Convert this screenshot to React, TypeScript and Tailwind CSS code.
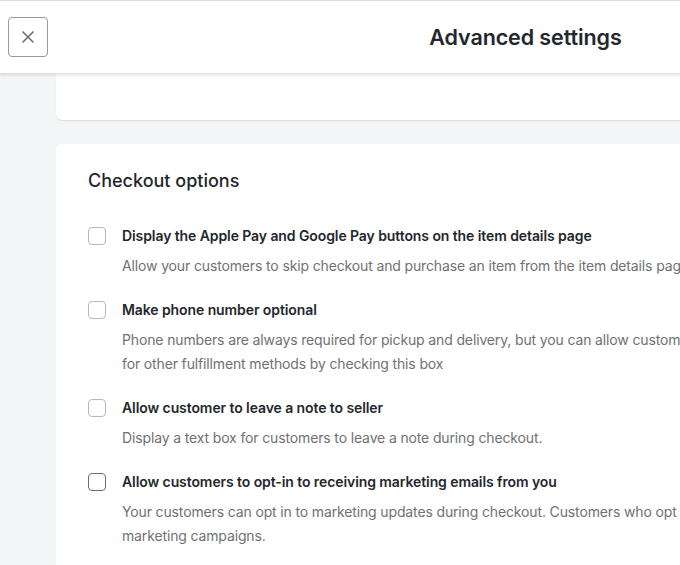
import React from "react";

const items = [
  {
    title: "Display the Apple Pay and Google Pay buttons on the item details page",
    desc: ["Allow your customers to skip checkout and purchase an item from the item details page without adding it to their cart first."],
    dark: false,
  },
  {
    title: "Make phone number optional",
    desc: [
      "Phone numbers are always required for pickup and delivery, but you can allow customers to skip this field",
      "for other fulfillment methods by checking this box",
    ],
    dark: false,
  },
  {
    title: "Allow customer to leave a note to seller",
    desc: ["Display a text box for customers to leave a note during checkout."],
    dark: false,
  },
  {
    title: "Allow customers to opt-in to receiving marketing emails from you",
    desc: [
      "Your customers can opt in to marketing updates during checkout. Customers who opt in will be added to your",
      "marketing campaigns.",
    ],
    dark: true,
  },
];

export default function App() {
  return (
    <div
      className="w-[680px] h-[565px] overflow-hidden bg-[#f4f5f6] relative"
      style={{ fontFamily: "Inter, 'Noto Sans', sans-serif" }}
    >
      <div className="w-[1050px]">
        <div className="relative z-10 h-[73px] bg-white border-t border-[#dcdcdc] shadow-[0_2px_3px_rgba(0,0,0,0.12)] flex items-center px-2">
          <button className="w-10 h-10 border border-[#9a9a9a] rounded-[4px] flex items-center justify-center text-[#666]">
            <svg width="14" height="14" viewBox="0 0 14 14" fill="none" stroke="#6f6f6f" strokeWidth="1.6">
              <path d="M1.5 1.5 L12.5 12.5 M12.5 1.5 L1.5 12.5" />
            </svg>
          </button>
          <div className="flex-1 text-center text-[21.5px] font-semibold text-[#23272d] pr-[39px] tracking-[-0.1px]">
            Advanced settings
          </div>
        </div>
        <div className="px-[56px]">
          <div className="h-[47px] bg-white rounded-b-[6px] shadow-[0_1px_1px_rgba(0,0,0,0.1)]" />
          <div className="mt-[24px] bg-white rounded-[6px] px-8 pt-[25px] pb-8">
            <h2 className="text-[18px] leading-6 font-medium text-[#23272d]">Checkout options</h2>
            <div className="mt-[31px] flex flex-col gap-5">
              {items.map((it) => (
                <div key={it.title} className="flex gap-4">
                  <div className="pt-[3px]">
                    <div
                      className={
                        it.dark
                          ? "w-[18px] h-[18px] rounded-[4px] border border-[#6b6e73] bg-white"
                          : "w-[18px] h-[18px] rounded-[4px] border border-[#b8b8b8] bg-white"
                      }
                    />
                  </div>
                  <div>
                    <div className="text-[14px] leading-6 font-semibold text-[#23272d] tracking-[-0.09px]">{it.title}</div>
                    <div className="mt-[6px] text-[14px] leading-6 text-[#6f7175] whitespace-nowrap tracking-[-0.14px]">
                      {it.desc.map((d) => (
                        <div key={d}>{d}</div>
                      ))}
                    </div>
                  </div>
                </div>
              ))}
            </div>
          </div>
        </div>
      </div>
    </div>
  );
}
